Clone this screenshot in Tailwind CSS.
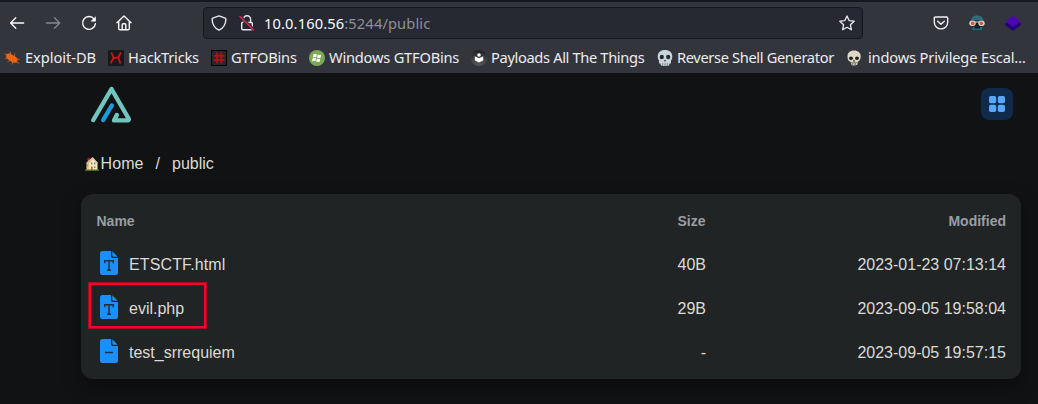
<!DOCTYPE html>
<html lang="en">
<head>
<meta charset="utf-8">
<title>public</title>
<script src="https://cdn.jsdelivr.net/npm/@tailwindcss/browser@4"></script>
</head>
<body class="w-[1038px] h-[404px] overflow-hidden bg-[#111213] font-['Liberation_Sans',sans-serif] text-base text-[#dcdad6]">
<header class="h-[73px] border-t-2 border-[#17181d] bg-[#33353c] font-['Noto_Sans',sans-serif] text-[#fbfbfe]">
  <div class="flex h-[41px] items-center">
    <svg class="ml-[9px] size-4 mr-[20px]" viewBox="0 0 16 16" fill="none" stroke="#fbfbfe" stroke-width="1.3" stroke-linecap="round" stroke-linejoin="round"><path d="M14.700 8H2M6.800 2.800L1.600 8l5.200 5.200"/></svg>
    <svg class="size-4 mr-[20px]" viewBox="0 0 16 16" fill="none" stroke="#85868a" stroke-width="1.3" stroke-linecap="round" stroke-linejoin="round"><path d="M1.500 8h13M9.500 2.800L14.700 8l-5.200 5.200"/></svg>
    <svg class="size-4 mr-[19px]" viewBox="0 0 16 16" fill="none" stroke="#fbfbfe" stroke-width="1.4" stroke-linecap="round"><path d="M13.2 4.2A6.4 6.4 0 1 0 14.4 8.6"/><path d="M14.8 1.2v5.3H9.5z" fill="#fbfbfe" stroke="none"/></svg>
    <svg class="size-4 mr-[71px]" viewBox="0 0 16 16" fill="none" stroke="#fbfbfe" stroke-width="1.4" stroke-linecap="round" stroke-linejoin="round"><path d="M1 7.7L8 1l7 6.7M2.7 6.5v7q0 1.3 1.3 1.3h8q1.300 0 1.300-1.300v-7M6.200 14.600V9.800q0-1 1-1h1.600q1 0 1 1v4.800"/></svg>
    <div class="mt-px flex h-8 w-[660px] items-center rounded-[4px] border border-[#17181d] bg-[#272932]">
      <svg class="ml-[7px] size-4" viewBox="0 0 16 16" fill="none" stroke="#e9e9ed" stroke-width="1.4" stroke-linejoin="round"><path d="M8 .9l6.200 2.300q.7.300.7 1C14.700 9.500 12.500 13 8 15.200 3.500 13 1.300 9.500 1.100 4.200q0-.7.7-1z"/></svg>
      <svg class="ml-3 size-4" viewBox="0 0 16 16" fill="none" stroke="#e9e9ed" stroke-width="1.400" stroke-linecap="round"><path d="M4.400 6.500V4.400a3.600 3.600 0 0 1 7.200 0v2.500M3.500 7.500q-.8 0-.8.800v5.200q0 1.200 1.200 1.200h8.200q1.200 0 1.200-1.200V8.300q0-.8-.8-.8H8.500"/><path d="M1.300 1.500l13.400 13.300" stroke="#272932" stroke-width="3"/><path d="M1 1.500l13.700 13.500" stroke="#e22850"/></svg>
      <span class="-mt-px ml-[9px] h-[22px] whitespace-nowrap text-[14.67px] leading-[22px] tracking-[0.13px] text-[#8e8f96]"><span class="text-[#fbfbfe]">10.0.160.56</span>:5244/public</span>
      <svg class="ml-auto mr-[7px] size-4" viewBox="0 0 16 16" fill="none" stroke="#e9e9ed" stroke-width="1.300" stroke-linejoin="round"><path d="M8 .9l2.100 4.700 5.100.6-3.800 3.500 1 5.100L8 12.300l-4.400 2.500 1-5.100L.8 6.200l5.100-.6z"/></svg>
    </div>
    <svg class="ml-[70px] size-4" viewBox="0 0 16 16" fill="none" stroke="#f0f0f4" stroke-width="1.400" stroke-linecap="round" stroke-linejoin="round"><path d="M2.500 2h11q1.200 0 1.200 1.200v4a6.700 6.700 0 0 1-13.400 0v-4Q1.300 2 2.500 2zM4.700 6.300L8 9.300l3.300-3"/></svg>
    <svg class="ml-5 size-4" viewBox="0 0 16 16"><path d="M2 6.500C2 2.500 4.500.5 8 .5S14.500 2.500 14.500 6.500z" fill="#2d7181"/><path d="M2.500 5.500h11.500v6H2.500z" fill="#171d24"/><path d="M4.500 3.500h5" stroke="#38596a"/><path d="M3.500 12h9.500v3H3.500z" fill="#1e6d80"/><path d="M5.500 12v1.500h5.500V12" fill="#101820"/><ellipse cx="3.500" cy="8.300" rx="3.200" ry="2.800" fill="#d9d7cc"/><ellipse cx="12.500" cy="8.300" rx="3.200" ry="2.800" fill="#d9d7cc"/><path d="M6 7h4" stroke="#d9d7cc"/><circle cx="3.700" cy="8.400" r="1.800" fill="#e54f35"/><circle cx="12.300" cy="8.400" r="1.800" fill="#e54f35"/></svg>
    <svg class="ml-5 size-4" viewBox="0 0 16 16"><path d="M.2 8.500L8 3l7.800 5.500v1.700L8 15.700.2 10.200z" fill="#21007c"/><path d="M8 .3L15.800 6.500 8 12 .2 6.500z" fill="#4b08ad"/></svg>
  </div>
  <nav class="flex h-[30px] items-center whitespace-nowrap text-[14.67px] leading-[22px] text-[#ececf0] [&_span]:-mt-[2px]">
    <div class="ml-1 flex w-[104px] items-center gap-[5px]"><svg class="size-4 shrink-0" viewBox="0 0 16 16"><path d="M2 4.500q2-1.500 4-1l6 3.500q2 1.500 1.500 4l-1 1.500q-3 .5-5-.5L3.500 9Q1.500 7 2 4.500z" fill="#ee6612"/><path d="M1 8.500l4-1M.5 3.500l3 2M6 1.800l1 3M11 3.500l-1 3M15.500 9.500l-3-.5M15 13.500l-3-2M8 14.500l1-3M3.500 12l3-2" stroke="#c9631f" stroke-width=".9"/></svg><span class="tracking-[-0.05px]">Exploit-DB</span></div>
    <div class="flex w-[103px] items-center gap-1"><svg class="size-4 shrink-0" viewBox="0 0 16 16"><path d="M0 0h16v16H0z" fill="#17191d"/><path d="M3.300 2.500l2 4.500q.4 1-.5 2l-2 4.500M13 2.500l-2.200 4q-.7 1.500 0 2.500l1.700 4.500M5 8.500l6-1.500" fill="none" stroke="#e01212" stroke-width="1.700"/></svg><span class="tracking-[-0.22px]">HackTricks</span></div>
    <div class="flex w-[98px] items-center gap-1"><svg class="size-4 shrink-0" viewBox="0 0 16 16"><path d="M.5.5h15v15H.5z" fill="#26282d" stroke="#000"/><path d="M6 2.500v11M10.300 2.500v11M2.700 5.800h10.800M2.700 10.200h10.800" stroke="#c30c12" stroke-width="1.700"/></svg><span class="tracking-[-0.18px]">GTFOBins</span></div>
    <div class="flex w-[162px] items-center gap-1"><svg class="size-4 shrink-0" viewBox="0 0 16 16"><circle cx="8" cy="8" r="8" fill="#7ba957"/><path d="M4.500 4.200q1.800-.8 3.300 0L7.200 7.400q-1.700-.7-3.300 0zM8.700 4.600q1.500.8 3.500.2l-.7 3q-1.700.6-3.400-.2zM3.700 8.300q1.700-.7 3.300 0l-.6 3q-1.600-.7-3.300 0zM7.900 8.600q1.700.8 3.400.2l-.7 3q-1.700.6-3.400-.2z" fill="#fff"/></svg><span class="tracking-[-0.22px]">Windows GTFOBins</span></div>
    <div class="flex w-[186px] items-center gap-1"><svg class="size-4 shrink-0" viewBox="0 0 16 16"><defs><linearGradient id="g" x2="0" y2="1"><stop stop-color="#202124"/><stop offset="1" stop-color="#56575a"/></linearGradient></defs><circle cx="8" cy="8" r="8" fill="url(#g)"/><circle cx="8" cy="5" r="1.800" fill="#fff"/><path d="M3.800 6.200L8 8.300l4.200-2.100v4.300L8 12.600l-4.200-2.100z" fill="#fff"/></svg><span class="tracking-[-0.35px]">Payloads All The Things</span></div>
    <div class="flex w-[189px] items-center gap-1"><svg class="size-4 shrink-0" viewBox="0 0 16 16"><path d="M8 0c4.500 0 7.300 2.500 7.300 6.300 0 2.300-.6 3.300-1.300 4.200v2.300q-.3 1-1.500.8l-.4 2Q8 16.500 3.900 15.600l-.4-2Q2.300 13.800 2 12.800v-2.300C1.300 9.600.7 8.600.7 6.300.7 2.500 3.500 0 8 0z" fill="#c9d3da"/><ellipse cx="4.800" cy="7" rx="2.100" ry="2.200" fill="#252a31"/><ellipse cx="11.200" cy="7" rx="2.100" ry="2.200" fill="#252a31"/><path d="M8 9.500l1.200 1.800H6.800z" fill="#252a31"/><path d="M5.700 13v3M8 13.200V16M10.300 13v3" stroke="#60707c" stroke-width=".8"/></svg><span class="tracking-[-0.36px]">Reverse Shell Generator</span></div>
    <div class="flex items-center gap-[6px]"><svg class="size-4 shrink-0" viewBox="0 0 16 16"><path d="M8 .5c4 0 6.700 2.300 6.700 5.700 0 2-.4 3-1.400 4.500l-1.500 1-.5 3Q8.500 16.200 5.500 15l-.8-3-2-1.200C1.800 9.300 1.500 8 1.500 6.200 1.500 2.800 4 .5 8 .5z" fill="#dbd7c3"/><ellipse cx="5" cy="8.300" rx="1.900" ry="1.700" fill="#1c1d1d"/><ellipse cx="11" cy="8.300" rx="1.900" ry="1.700" fill="#1c1d1d"/><path d="M8 9.500l1 2H7z" fill="#1c1d1d"/><path d="M5 12.700h6M6.500 12.700V15M8 12.700V15.500M9.500 12.700V15" stroke="#6b6859" stroke-width=".7"/></svg><span class="tracking-[-0.17px]">indows Privilege Escal…</span></div>
  </nav>
</header>
<main class="px-[17px] pl-[81px]">
  <div class="flex h-16 items-center justify-between pr-2">
    <svg class="ml-[9px] h-[38px] w-[42px]" viewBox="0 0 42 38" fill="none" stroke-linecap="round" stroke-linejoin="round"><path d="M3.300 34L21.500 3 38.600 32.500q.800 1.900-1.200 1.900H24L26.800 29" stroke="#70c6be" stroke-width="4.400"/><path d="M13.200 34L21.800 19.500" stroke="#1b9bdc" stroke-width="4.400"/></svg>
    <div class="-mt-0.5 flex size-8 items-center justify-center rounded-lg bg-[#102a4c]"><svg class="size-4" viewBox="0 0 16 16" fill="#59a6fa"><rect width="7.200" height="7.200" rx="1.800"/><rect x="8.800" width="7.200" height="7.200" rx="1.800"/><rect y="8.800" width="7.200" height="7.200" rx="1.800"/><rect x="8.800" y="8.800" width="7.200" height="7.200" rx="1.800"/></svg></div>
  </div>
  <div class="flex h-[57px] items-center pb-[4px] pl-1 leading-6">
    <svg class="mr-[1.5px] mt-px h-[16px] w-[14px]" viewBox="0 0 14 16"><path d="M2.500 2h2v3h-2z" fill="#b42035"/><path d="M1.500 7L5 4v10H1.500z" fill="#e9c890"/><path d="M4 6.500l4-5 4.500 5V14H4z" fill="#fbe6b3"/><path d="M1 7l3-3 3.500-3L13 7l-1 .500L7.800 3 4 7.500z" fill="#d8bb99"/><path d="M6 6.500h1.500v2H6zM9 6.500h1.500v2H9zM2.300 8.500h1v2h-1zM9 10.500h1.500v1.500H9z" fill="#668fa6"/><path d="M6 10.500h1.700V14H6z" fill="#b66f45"/><path d="M0 13.500h14v1.300H0z" fill="#4b8327"/></svg>
    <span class="tracking-[0.1px]">Home</span><span class="ml-3">/</span><span class="ml-3">public</span>
  </div>
  <section class="h-[185px] w-[940px] rounded-xl bg-[#212425] pl-[15.5px] pr-[15px] pt-[5px] shadow-[0_8px_20px_rgba(0,0,0,0.35)]">
    <div class="flex h-[43px] items-center text-sm font-bold text-[#989ea4]"><span class="w-[460px]">Name</span><span class="w-[149px] text-right">Size</span><span class="flex-1 text-right">Modified</span></div>
    <div class="flex h-11 items-center"><svg class="-mt-0.5 ml-[3.5px] mr-[11px] h-6 w-[18px]" viewBox="0 0 18 24"><path d="M2.500 0H11v5q0 2 2 2h5v14.500Q18 24 15.500 24h-13Q0 24 0 21.500v-19Q0 0 2.500 0zM12.300.3L17.700 5.700H13.500q-1.200 0-1.200-1.200z" fill="#1890ff"/><path d="M4.700 12.300V9.700h8.600v2.600M9 9.700v9.600M7 19.300h4" fill="none" stroke="#212c36" stroke-width="1.400"/></svg><span class="w-[428px] pt-0.5 tracking-[0.12px]">ETSCTF.html</span><span class="w-[149px] pt-0.5 text-right">40B</span><span class="flex-1 pt-0.5 text-right">2023-01-23 07:13:14</span></div>
    <div class="relative flex h-11 items-center"><div class="absolute left-[-7.5px] top-[-3px] h-[45px] w-[117px] border-2 border-[#ff0025] outline outline-[#ad0b23] -outline-offset-0 ring-inset"></div><svg class="-mt-0.5 ml-[3.5px] mr-[11px] h-6 w-[18px]" viewBox="0 0 18 24"><path d="M2.500 0H11v5q0 2 2 2h5v14.500Q18 24 15.500 24h-13Q0 24 0 21.500v-19Q0 0 2.500 0zM12.300.3L17.700 5.700H13.500q-1.200 0-1.200-1.200z" fill="#1890ff"/><path d="M4.700 12.300V9.700h8.600v2.600M9 9.700v9.600M7 19.300h4" fill="none" stroke="#212c36" stroke-width="1.400"/></svg><span class="w-[428px] pt-0.5">evil.php</span><span class="w-[149px] pt-0.5 text-right">29B</span><span class="flex-1 pt-0.5 text-right">2023-09-05 19:58:04</span></div>
    <div class="flex h-11 items-center"><svg class="-mt-0.5 ml-[3.5px] mr-[11px] h-6 w-[18px]" viewBox="0 0 18 24"><path d="M2.500 0H11v5q0 2 2 2h5v14.500Q18 24 15.500 24h-13Q0 24 0 21.500v-19Q0 0 2.500 0zM12.300.3L17.700 5.700H13.500q-1.200 0-1.200-1.200z" fill="#1890ff"/><path d="M5 13.500h8" stroke="#212c36" stroke-width="1.500"/></svg><span class="w-[428px] pt-0.5">test_srrequiem</span><span class="w-[149px] pt-0.5 text-right">-</span><span class="flex-1 pt-0.5 text-right">2023-09-05 19:57:15</span></div>
  </section>
</main>
</body>
</html>
